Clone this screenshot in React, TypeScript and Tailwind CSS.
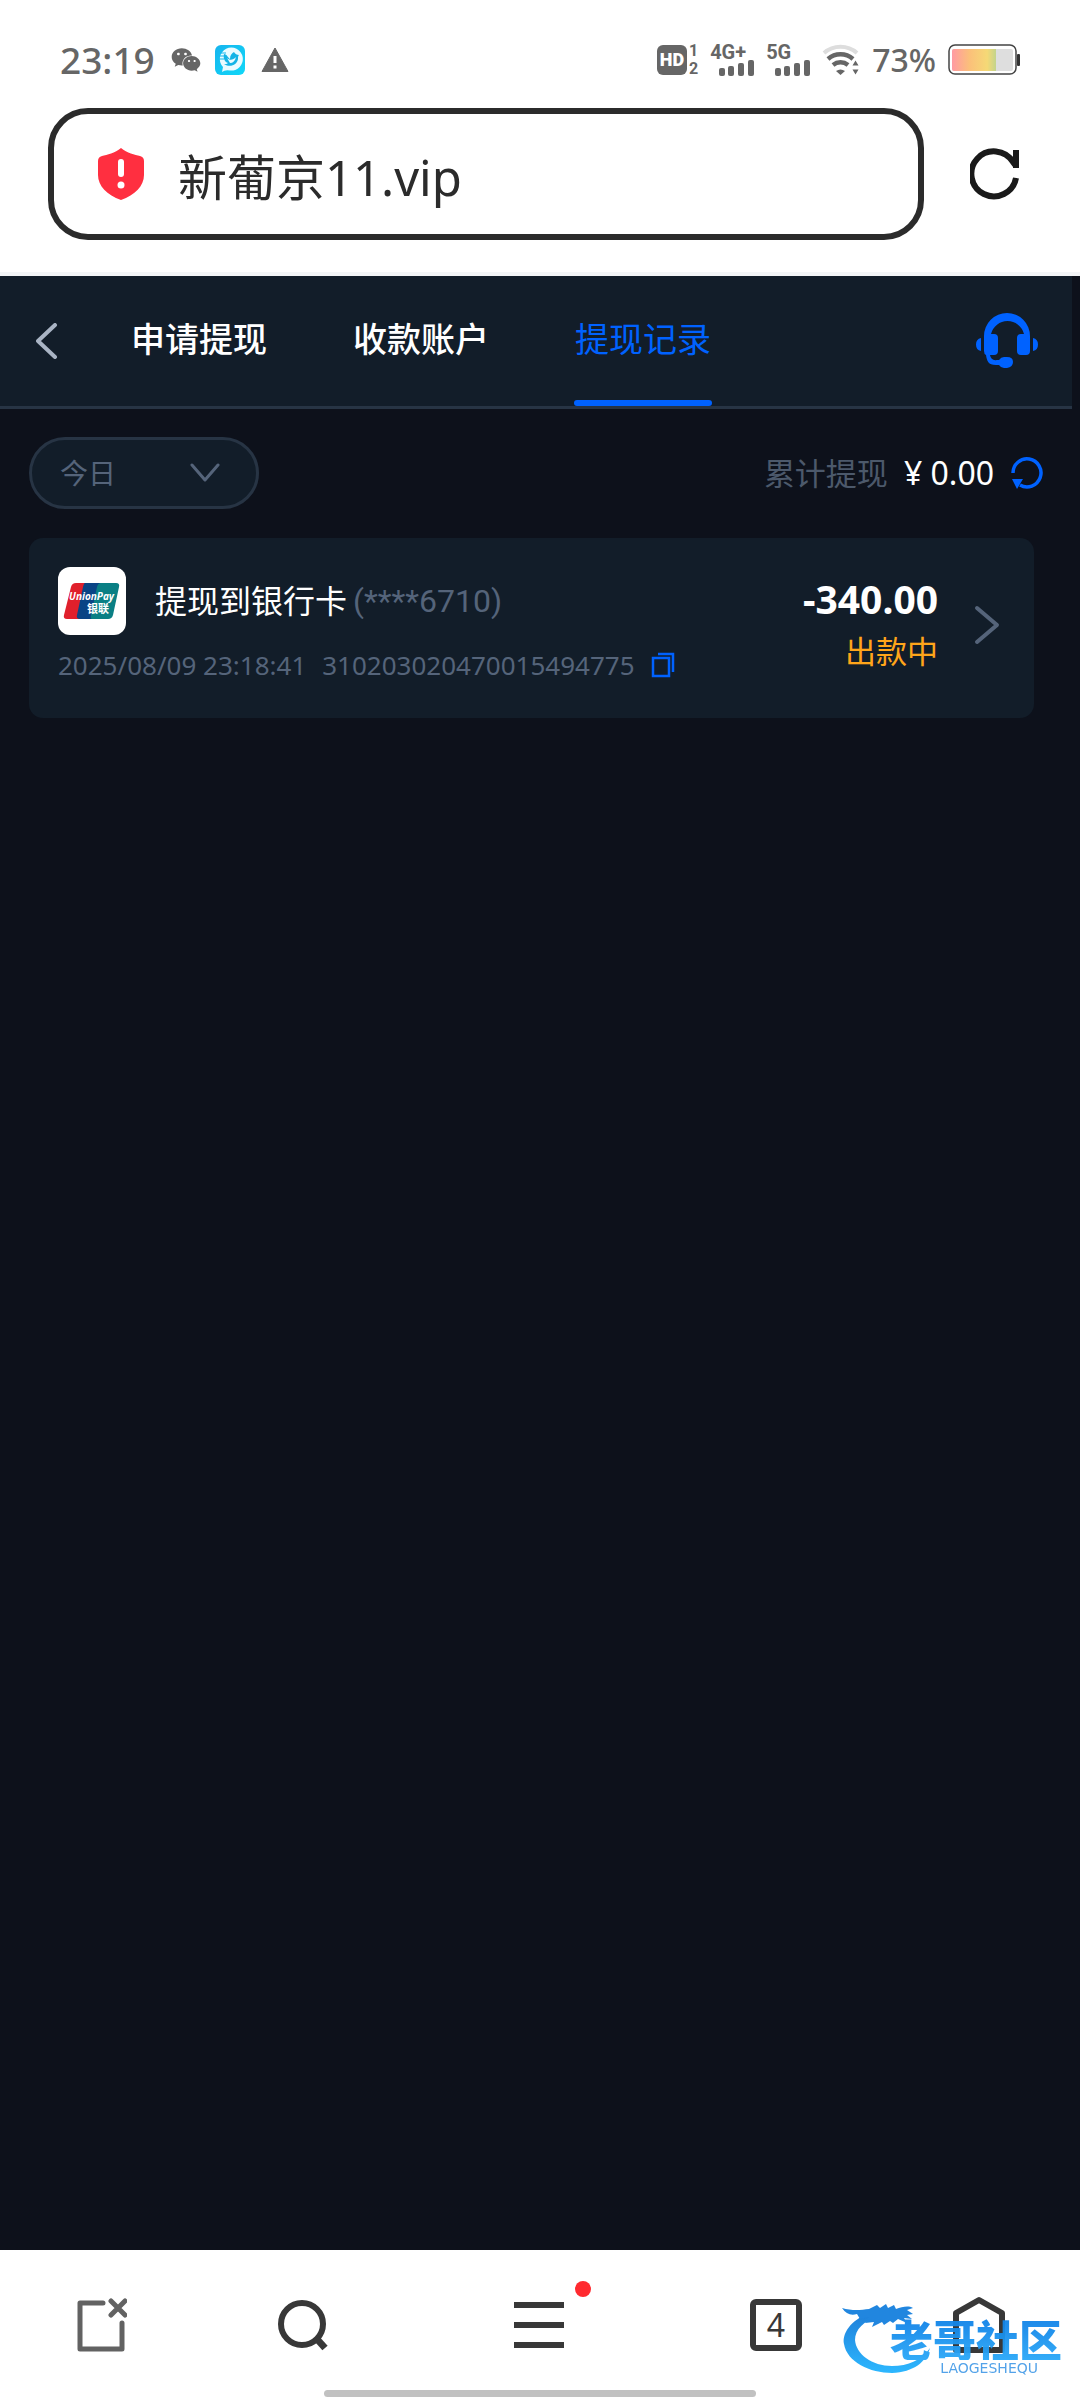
import React, { useState } from 'react';
import { FaWeixin } from 'react-icons/fa';

const tabs = ['申请提现', '收款账户', '提现记录'];

function SignalBars({ label }: { label: string }) {
  return (
    <div className="flex flex-col w-11">
      <span className="font-['Roboto','Noto_Sans',sans-serif] font-bold text-xl leading-4">{label}</span>
      <svg width="44" height="16" viewBox="0 0 44 16" fill="currentColor" aria-hidden="true">
        <rect x="9" y="8" width="6" height="8" rx="2" />
        <rect x="18" y="6" width="6" height="10" rx="2" />
        <rect x="28" y="3" width="6" height="13" rx="2" />
        <rect x="38" y="0" width="6" height="16" rx="2" />
      </svg>
    </div>
  );
}

function StatusBar() {
  return (
    <div className="flex items-center justify-between px-[60px] h-[120px] text-[#666]">
      <div className="flex items-center">
        <span className="text-[37px] leading-10 font-medium">23:19</span>
        <FaWeixin className="ml-4 size-[30px]" />
        <svg className="ml-3.5" width="30" height="30" viewBox="0 0 30 30" aria-hidden="true">
          <defs>
            <linearGradient id="chat" x2="1" y2="1">
              <stop offset="0" stopColor="#16b4ee" />
              <stop offset="1" stopColor="#10d8f8" />
            </linearGradient>
          </defs>
          <rect width="30" height="30" rx="6" fill="url(#chat)" />
          <path d="M7 27l1-5A11.500 11.500 0 1 1 15 25.500q-5-1-8 1.500z" fill="#e9fbff" />
          <path d="M5 8h6M4 11h6M4 14h5" stroke="#16b8ee" strokeWidth="1.200" />
          <path d="M9 9c3 0 4 4 6 5 0-4 2-6 4-7 1 2 3 3 5 3-1 1-1 2-1 4-1 6-8 9-14 5 2 0 3 0 4-1-3-1-5-4-4-9z" fill="#14b4e6" />
          <path d="M12 13c3 3 6 2 9-1-1 4-3 6-6 6z" fill="#e9fbff" />
        </svg>
        <svg className="ml-4" width="28" height="26" viewBox="0 0 28 26" aria-hidden="true">
          <path d="M14 1 27 24.500H1z" fill="currentColor" stroke="currentColor" strokeWidth="1" strokeLinejoin="round" />
          <path d="M14 9v7M14 18.500v3" stroke="#fff" strokeWidth="3" />
        </svg>
      </div>
      <div className="flex items-center">
        <span className="flex items-center justify-center size-[30px] rounded-md bg-[#666] text-white font-['Roboto',sans-serif] font-black text-lg">HD</span>
        <span className="ml-0.5 flex flex-col font-['Roboto',sans-serif] font-bold text-base leading-[18px]">
          <span className="text-center">1</span>
          <span>2</span>
        </span>
        <div className="ml-3 flex gap-3">
          <SignalBars label="4G+" />
          <SignalBars label="5G" />
        </div>
        <svg className="ml-3" width="38" height="32" viewBox="0 0 38 32" fill="none" aria-hidden="true">
          <path d="M2 9a25 25 0 0 1 33 0" stroke="#ddd" strokeWidth="4" />
          <path d="M6 15a19 19 0 0 1 25 0" stroke="currentColor" strokeWidth="4.500" />
          <path d="M11 21a12 12 0 0 1 15 0" stroke="currentColor" strokeWidth="4.500" />
          <path d="M14 27q4.500-3 9 0l-4.500 4z" fill="currentColor" />
          <path d="M33.500 16.500l3 5h-6zM33.500 30.500l3-5h-6z" fill="currentColor" />
        </svg>
        <span className="ml-3 text-[32px] leading-10 font-medium">73%</span>
        <svg className="ml-3" width="72" height="32" viewBox="0 0 72 32" aria-hidden="true">
          <defs>
            <linearGradient id="charge">
              <stop offset="0" stopColor="#ff9aa2" />
              <stop offset="0.400" stopColor="#fbc07a" />
              <stop offset="0.800" stopColor="#f5d976" />
              <stop offset="1" stopColor="#c3d48c" />
            </linearGradient>
          </defs>
          <rect x="1" y="1" width="67" height="29" rx="6" fill="#fff" stroke="#444" strokeWidth="1.500" />
          <rect x="4" y="5" width="61" height="22" rx="2" fill="#dedede" />
          <path d="M6 5h42v22H6a2 2 0 0 1-2-2V7a2 2 0 0 1 2-2z" fill="url(#charge)" />
          <rect x="69" y="10" width="3" height="12" rx="1" fill="#333" />
        </svg>
      </div>
    </div>
  );
}

function AddressBar() {
  return (
    <div className="flex items-center pl-12 pr-[60px]">
      <label className="flex flex-1 min-w-0 items-center h-[132px] rounded-[40px] border-6 border-[#2b2b2b] pl-11">
        <svg width="46" height="52" viewBox="0 0 46 52" aria-hidden="true">
          <path d="M23 0c6 5 14 7 19 8q4 1 4 5v14c0 11-9 20-23 25C9 47 0 38 0 27V13q0-4 4-5c5-1 13-3 19-8z" fill="#ff2f40" />
          <path d="M23 14v12" stroke="#fff" strokeWidth="6" strokeLinecap="round" />
          <circle cx="23" cy="37" r="3.500" fill="#fff" />
        </svg>
        <input
          aria-label="网址"
          defaultValue="新葡京11.vip"
          className="ml-[34px] flex-1 min-w-0 text-[49px] h-20 text-[#2b2b2b] outline-none"
        />
      </label>
      <button aria-label="刷新" className="ml-[46px] text-[#1a1a1a]">
        <svg width="50" height="52" viewBox="0 0 50 52" fill="none" stroke="currentColor" strokeWidth="6">
          <path d="M46 30A22.500 22.500 0 1 1 43 14L46 18" />
          <path d="M46 2v18" />
        </svg>
      </button>
    </div>
  );
}

function Headset() {
  return (
    <svg width="62" height="58" viewBox="0 0 62 58" fill="#0062ff" aria-hidden="true">
      <path d="M8 24a23 23 0 0 1 46 0v15q0 4-4 4h-5q-4 0-4-4V26q0-4 4-4h3a17 17 0 0 0-33 0h3q4 0 4 4v13q0 4-4 4h-4q1 6 7 5h2q2-3 5-3h3q6 0 6 5t-6 6h-3q-3 0-5-3h-3c-8 0-9-4-10-10q-2-1-2-4z" />
      <path d="M5 26v13Q0 38 0 32.500T5 26zM57 26v13q5-1 5-6.500T57 26z" />
    </svg>
  );
}

function UnionPay() {
  return (
    <svg width="68" height="68" viewBox="0 0 68 68" aria-label="UnionPay 银联">
      <rect width="68" height="68" rx="12" fill="#fff" />
      <path d="M18 16h12l-8 36H9q-4 0-3-4l7-28q1-4 5-4z" fill="#e0202c" />
      <path d="M27 16h16l-8 36H22q-4 0-3-4l6-28q1-4 2-4z" fill="#0a4485" />
      <path d="M43 16h15q4 0 3 4l-6 28q-1 4-5 4H34q-2 0-1-4l6-28q1-4 4-4z" fill="#0a7f84" />
      <text x="11" y="33" fill="#fff" className="font-['Open_Sans',sans-serif] text-[10px] font-bold italic">UnionPay</text>
      <text x="29" y="46" fill="#fff" className="font-['Noto_Sans_CJK_SC',sans-serif] text-[11px] font-bold">银联</text>
    </svg>
  );
}

function Record() {
  return (
    <article className="ml-[29px] mr-[46px] mt-[29px] flex items-center h-[180px] rounded-[14px] bg-[#121d29] pl-[29px] pr-[34px] pb-1.5">
      <div className="flex-1 min-w-0">
        <div className="flex items-center">
          <UnionPay />
          <span className="ml-[29px] text-[32px] leading-10 text-white">提现到银行卡</span>
          <span className="ml-1.5 font-['Roboto',sans-serif] text-[32px] leading-10 text-[#55647a]">(****6710)</span>
        </div>
        <div className="mt-3 flex items-center text-[26px] leading-9 text-[#55647a]">
          <time>2025/08/09 23:18:41</time>
          <span className="ml-4">310203020470015494775</span>
          <button aria-label="复制" className="ml-4">
            <svg width="24" height="26" viewBox="0 0 24 26" fill="none" stroke="#0062ff" strokeWidth="2.500">
              <path d="M2 6h16v18H2zM7 2h15v18" />
            </svg>
          </button>
        </div>
      </div>
      <div className="flex flex-col items-end">
        <span className="text-[39px] leading-[52px] font-bold text-white">-340.00</span>
        <span className="text-[31px] leading-[52px] text-[#ffa51a]">出款中</span>
      </div>
      <button aria-label="详情" className="ml-9">
        <svg width="26" height="40" viewBox="0 0 26 40" fill="none" stroke="#55647a" strokeWidth="4" strokeLinecap="round" strokeLinejoin="round">
          <path d="M3 3l20 17L3 37" />
        </svg>
      </button>
    </article>
  );
}

function Watermark() {
  return (
    <div className="absolute right-[18px] bottom-6 w-[220px] h-[76px] pointer-events-none opacity-95">
      <svg className="absolute inset-0" width="220" height="76" viewBox="0 0 220 76" aria-hidden="true">
        <defs>
          <linearGradient id="dragon" x2="0" y2="1">
            <stop offset="0" stopColor="#1479d8" />
            <stop offset="1" stopColor="#22b4ff" />
          </linearGradient>
        </defs>
        <path d="M28 13C8 20 0 34 2 44c3 18 26 29 48 29 22-1 34-11 38-25-8 12-22 18-38 18-20 0-36-12-37-26 0-10 9-20 23-23z" fill="url(#dragon)" />
        <path d="M0 8c10 3 19 2 27 1l8-4 3 3 6-4 2 4 6-3 2 4c6-2 12-4 17-1l-6 2 6 4-6 1 5 4-8-1 3 5-9-4-5 4-3-2-6 4-2-3-10 5 2-5-9 1 4-6-9 2-3-5c-6 2-11 0-15-6z" fill="#1680de" />
      </svg>
      <div className="absolute right-0 top-4 font-['Noto_Sans_CJK_SC',sans-serif] font-black text-[43px] leading-[44px] whitespace-nowrap bg-gradient-to-b from-[#0f7fe6] to-[#2aa8f8] bg-clip-text text-transparent">老哥社区</div>
      <div className="absolute right-6 bottom-0 font-['DejaVu_Sans',sans-serif] text-[14px] leading-4 text-[#4a9ee8]">LAOGESHEQU</div>
    </div>
  );
}

function BottomNav() {
  return (
    <nav className="relative h-[150px] bg-white flex flex-col justify-between pt-[46px] pb-[3px] text-[#383838]">
      <div className="flex items-center justify-between pl-[77px] pr-[75px]">
        <div className="flex items-center gap-[151px]">
          <button aria-label="关闭页面">
            <svg width="50" height="54" viewBox="0 0 50 54" fill="none" stroke="#626262" strokeWidth="5" strokeLinecap="round" strokeLinejoin="round">
              <path d="M26 5H3v46h42V25M34 3l14 14M48 3L34 17" />
            </svg>
          </button>
          <button aria-label="搜索">
            <svg width="50" height="54" viewBox="0 0 50 54" fill="none" stroke="currentColor" strokeWidth="6">
              <circle cx="24" cy="26" r="21" />
              <path d="M38 40l9 10" strokeWidth="7" />
            </svg>
          </button>
        </div>
        <button aria-label="菜单" className="relative">
          <svg width="50" height="46" viewBox="0 0 50 46" fill="none" stroke="currentColor" strokeWidth="6">
            <path d="M0 3h50M0 23h50M0 43h50" />
          </svg>
          <span className="absolute -top-[21px] -right-[27px] size-4 rounded-full bg-[#ff2a2f]" />
        </button>
        <div className="flex items-center gap-[151px]">
          <button aria-label="标签页" className="flex items-center justify-center size-[52px] rounded-md border-6 border-current text-[32px] leading-8">
            4
          </button>
          <button aria-label="主页">
            <svg width="52" height="58" viewBox="0 0 52 58" fill="none" stroke="currentColor" strokeWidth="6" strokeLinejoin="round">
              <path d="M3 17L26 4l23 13v37H3z" />
            </svg>
          </button>
        </div>
      </div>
      <div className="self-center w-2/5 h-[7px] rounded-full bg-[#c1c1c1]" />
      <Watermark />
    </nav>
  );
}

export default function App() {
  const [active, setActive] = useState('提现记录');

  return (
    <div className="min-h-screen flex flex-col bg-[#0d111b] font-['Noto_Sans','Noto_Sans_CJK_SC',sans-serif]">
      <header className="bg-white border-b-4 border-[#f3f5f7] h-[276px]">
        <div className="-mb-3">
          <StatusBar />
        </div>
        <AddressBar />
      </header>

      <main className="flex-1 flex flex-col">
        <div className="mr-2 flex items-stretch h-[133px] border-b-3 border-[#273444] bg-[#121d29] pl-9 pr-[34px]">
          <button aria-label="返回">
            <svg width="22" height="36" viewBox="0 0 22 36" fill="none" stroke="#a9b4c4" strokeWidth="4" strokeLinecap="round" strokeLinejoin="round">
              <path d="M19 2L2 18l17 16" />
            </svg>
          </button>
          <div className="ml-[72px] flex flex-1 gap-[84px]">
            {tabs.map((tab) => (
              <button
                key={tab}
                onClick={() => setActive(tab)}
                className={
                  tab === active
                    ? 'relative text-[34px] px-px pb-1 text-[#0062ff]'
                    : 'relative text-[34px] px-px pb-1 text-white font-medium'
                }
              >
                {tab}
                {tab === active && <span className="absolute inset-x-0 bottom-0 h-1.5 rounded-full bg-[#0062ff]" />}
              </button>
            ))}
          </div>
          <button aria-label="客服">
            <Headset />
          </button>
        </div>

        <div className="mt-7 flex items-center justify-between pl-[29px] pr-9">
          <button className="flex items-center justify-between w-[230px] h-[72px] rounded-full border-3 border-[#273444] bg-[#121d29] pl-7 pr-9 text-[28px] text-[#55647a]">
            今日
            <svg width="30" height="20" viewBox="0 0 30 20" fill="none" stroke="#55647a" strokeWidth="3" strokeLinecap="round" strokeLinejoin="round">
              <path d="M2 2l13 15L28 2" />
            </svg>
          </button>
          <div className="flex items-center text-[31px]">
            <span className="text-[#4c596b]">累计提现</span>
            <span className="ml-4 text-[32px] text-white">¥ 0.00</span>
            <button aria-label="刷新金额" className="ml-4">
              <svg width="34" height="34" viewBox="0 0 34 34" fill="none" stroke="#0062ff" strokeWidth="3.500">
                <path d="M3 17A14 14 0 1 1 10 29" />
                <path d="M2 23h11L7 33z" fill="#0062ff" stroke="none" />
              </svg>
            </button>
          </div>
        </div>

        <Record />
      </main>

      <BottomNav />
    </div>
  );
}
